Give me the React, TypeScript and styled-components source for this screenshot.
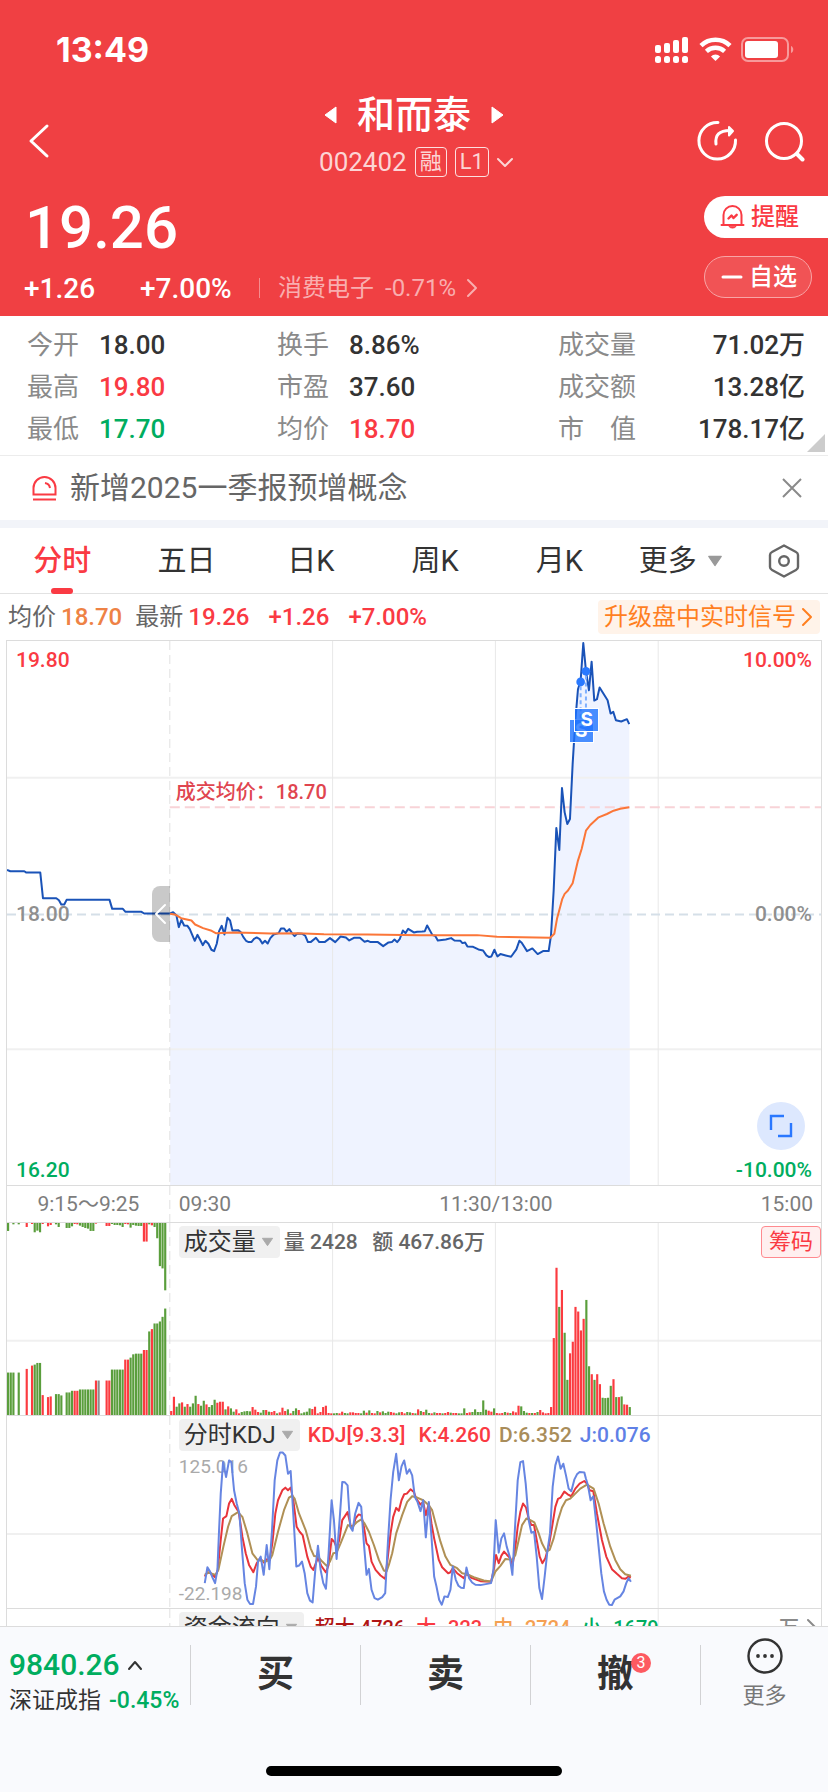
import React from "react";
import styled, { createGlobalStyle, css } from "styled-components";

const RED = "#fa3a43";
const GREEN = "#00ad5f";
const INK = "#333333";
const LINE = "#dcdcdc";

const GlobalStyle = createGlobalStyle`
  * { box-sizing: border-box; }
  body {
    margin: 0;
    background: #ffffff;
    color: ${INK};
    font-family: Roboto, "Noto Sans CJK SC", sans-serif;
  }
  button {
    font: inherit;
    color: inherit;
    background: none;
    border: 0;
    padding: 0;
    cursor: pointer;
  }
  a { color: inherit; text-decoration: none; }
  svg { display: block; flex: none; }
  dl, dt, dd, h1, p { margin: 0; }
`;

/* ---------- data ---------- */

const AUCTION_PRICE =
  "0,688 10,692 52,692 58,696 100,696 108,773 148,773 156,779 163,792 172,792 179,778 308,778 316,805 348,805 356,814 404,814 412,819 489,819";

const PRICE =
  "490,819 499,815 509,825 516,860 524,838 532,855 542,856 549,866 557,885 564,901 572,883 580,898 588,914 596,901 605,910 614,928 622,932 630,910 637,872 645,856 653,882 662,832 670,840 677,870 694,869 702,875 710,890 718,901 726,905 734,905 742,895 750,891 759,896 767,909 775,901 783,909 791,893 801,882 816,878 823,864 832,864 840,874 848,866 856,878 864,887 872,879 887,880 896,886 904,905 912,905 928,892 938,905 954,905 970,893 986,905 1002,888 1018,891 1028,900 1042,892 1060,892 1074,904 1084,901 1092,905 1114,905 1130,917 1146,906 1156,905 1164,897 1172,905 1180,895 1189,870 1197,878 1205,865 1222,876 1232,874 1247,873 1255,872 1262,855 1278,884 1286,886 1294,900 1318,897 1334,893 1344,900 1362,901 1368,908 1376,906 1383,918 1400,919 1416,927 1430,930 1440,945 1448,950 1455,948 1464,928 1473,948 1482,941 1498,945 1514,949 1530,927 1539,901 1546,907 1562,932 1578,924 1594,941 1610,932 1627,932 1634,885 1642,750 1650,562 1659,628 1667,442 1675,515 1683,550 1691,535 1699,370 1707,240 1715,145 1723,120 1731,6 1739,90 1748,148 1756,62 1764,179 1772,175 1780,140 1804,178 1813,218 1821,213 1829,238 1845,242 1862,235 1869,250";

const AVERAGE =
  "490,820 507,823 523,833 554,840 565,852 589,863 612,870 627,878 682,876 792,879 872,878 952,881 1082,882 1242,884 1412,884 1472,889 1632,892 1644,880 1652,835 1668,775 1675,760 1685,750 1699,728 1715,660 1726,625 1739,570 1752,553 1777,530 1802,520 1822,510 1842,504 1869,500";

const LINE_J =
  "594,504 602,456 610,469 618,489 625,504 632,464 637,344 642,234 649,139 658,184 667,134 674,139 682,224 690,264 698,294 706,404 714,504 722,554 730,567 739,567 748,514 754,439 762,424 771,479 780,389 788,462 796,344 804,194 812,134 820,110 828,110 836,119 844,174 852,166 861,314 869,454 877,451 886,439 894,474 902,534 910,557 918,562 926,464 934,391 942,464 950,504 958,521 966,414 975,254 982,314 990,431 999,314 1007,199 1015,200 1023,209 1031,334 1038,346 1046,294 1056,262 1064,274 1072,384 1080,479 1087,461 1095,524 1104,549 1114,554 1127,546 1136,534 1144,384 1152,254 1160,169 1169,114 1177,194 1185,152 1193,134 1201,174 1209,161 1217,179 1225,244 1233,259 1242,287 1250,254 1258,366 1267,259 1275,364 1283,484 1290,514 1298,554 1306,569 1314,544 1324,546 1332,524 1339,454 1348,494 1356,512 1364,518 1372,519 1380,457 1388,489 1397,502 1407,509 1422,510 1454,504 1461,464 1468,314 1477,412 1485,369 1493,354 1501,394 1510,424 1518,479 1526,334 1534,194 1542,139 1550,136 1558,204 1567,314 1575,352 1583,349 1591,424 1599,519 1607,552 1615,484 1623,409 1631,354 1639,214 1647,149 1655,122 1663,159 1671,144 1679,179 1687,219 1695,227 1704,192 1712,176 1720,169 1734,170 1739,189 1745,209 1753,254 1761,242 1769,314 1777,394 1785,474 1793,529 1801,554 1809,569 1817,570 1825,554 1842,544 1852,529 1860,504 1867,489 1874,500";

const LINE_K =
  "594,484 602,471 612,474 625,486 633,464 642,374 649,309 659,302 667,264 675,250 683,269 696,289 707,364 717,414 727,449 740,471 750,444 760,429 772,442 781,432 789,434 797,384 806,294 814,254 827,224 836,216 844,224 852,216 860,254 870,334 879,349 888,359 902,424 912,454 920,464 934,427 944,452 958,472 966,449 975,371 983,379 991,399 998,374 1007,314 1023,290 1032,329 1039,336 1047,309 1056,297 1064,299 1072,334 1080,384 1087,392 1095,439 1107,464 1122,481 1136,491 1144,424 1152,354 1160,304 1169,277 1177,286 1185,254 1193,236 1201,234 1212,221 1222,229 1229,249 1242,267 1250,259 1258,299 1267,264 1275,324 1283,369 1297,434 1307,456 1325,474 1331,472 1339,459 1352,474 1372,489 1380,476 1397,489 1422,498 1454,500 1462,464 1469,419 1477,444 1485,421 1493,409 1502,419 1512,429 1518,452 1526,404 1534,334 1542,289 1550,264 1559,276 1567,309 1575,329 1583,329 1592,379 1600,424 1608,444 1617,429 1628,389 1639,324 1647,274 1655,250 1663,246 1674,228 1684,236 1695,242 1707,219 1720,204 1734,196 1742,204 1750,224 1761,227 1772,294 1787,374 1800,424 1817,462 1832,476 1847,489 1857,491 1867,484 1874,487";

const LINE_D =
  "594,479 604,472 627,479 635,464 650,394 664,334 675,302 694,290 707,304 722,354 737,414 752,434 777,439 789,434 797,419 814,349 832,284 847,246 857,240 864,249 877,294 897,344 912,399 922,422 934,424 947,439 960,452 970,439 980,414 990,412 1002,384 1024,329 1037,334 1052,319 1064,312 1074,324 1087,349 1102,389 1117,434 1132,466 1140,469 1147,449 1157,414 1169,354 1187,299 1202,259 1217,242 1232,246 1250,254 1267,269 1277,284 1290,334 1302,379 1317,424 1332,449 1352,459 1367,474 1382,477 1402,486 1432,496 1454,499 1467,469 1482,452 1497,431 1518,434 1527,419 1537,374 1547,329 1560,309 1572,314 1584,321 1597,354 1607,384 1620,409 1630,404 1642,369 1655,314 1667,276 1679,254 1692,249 1707,234 1722,219 1742,207 1762,219 1777,264 1792,324 1812,394 1827,434 1842,462 1857,477 1874,482";

/* one entry per bar: height followed by its colour letter, "-" for an empty slot */
const AUCTION_MATCHED =
  "128g 128g 128g - 128g - - 139r - 149r 152g 157g 157g 60r - 54r 56r - 63g 63g 59g - 68g 68g 73g 73r 73r 77g 77g 77g 77g 77g 77g 104r 104n - - 104r 104r 137g 137g 137g 137g 137g 167r 167r 173g 183g 185g 185g 185g 196r 196r 252g 259r 276g 276g 282g 296g 321g";
const AUCTION_UNMATCHED =
  "24g - 4g - 4g - - 12r - 3r 28g 23g 28g 3r - 10r 6r - 4g 12g - - 15g 15g 10g 3r 4r 8g 12g 15g 17g 24g 24g 2r - - - 9r 9r 3g 6g 6g 7g 12g 3r 4r 14g 6g 8g 9g 9g 56r 56r 4g 7r 12g 46g 130g 137g 203g";
const VOLUME =
  "12r 55r 25g 35g 38r 25g 33r 25g 35g 58g 33r 28g 43g 32r 24g 30g 46g 37r 40r 40r 17g 26r 20g 10g 17r 5r 9g 11g 12g 11g 24r 16r 9r 7g 15g 15r 10g 9r 12r 5g 8r 22r 12r 17g 5r 12g 20g 15r 5g 8g 10g 20g 18r 25r 5r 9r 24r 28r 6r 5r 5g 6g 5r 10r 6g 5g 8r 8r 6r 6r 5g 13g 7r 14g 6r 5r 12g 8r 11g 6g 10g 9r 7r 5g 8g 9r 5r 9g 8g 6r 5g 17r 12g 9r 16g 6g 5r 8g 6r 6r 5g 6r 9r 7g 6r 6r 5g 5g 20g 6r 8r 9g 17g 9g 9g 44g 16g 13r 10r 20g 6r 5r 6r 9g 7r 6g 11r 8r 28r 26g 12g 7g 6r 6g 6r 9g 15r 8r 5r 6r 24r 232r 444r 326g 377r 248g 106g 186r 221r 326r 312r 255r 290r 347g 147g 123r 106g 123r 93r 52g 51g 52g 88g 108r 54g 54r 56g 32r 31r 24g";

const BAR_COLORS: Record<string, string> = { r: "#fb3b40", g: "#5a9e3c", n: "#8c8c8c" };

/* ---------- header ---------- */

const Page = styled.div`
  display: flex;
  flex-direction: column;
  height: 100vh;
`;

const Header = styled.header`
  flex: none;
  background: #f04043;
  color: #ffffff;
`;

const StatusBar = styled.div`
  display: flex;
  justify-content: space-between;
  align-items: center;
  height: 92px;
  padding: 8px 33px 0 56px;
`;

const Clock = styled.span`
  font: 700 34px/40px Inter, sans-serif;
`;

const NavRow = styled.div`
  display: grid;
  grid-template-columns: 1fr auto 1fr;
  align-items: center;
  height: 98px;
  padding: 0 22px 0 30px;
`;

const BackButton = styled.button`
  justify-self: start;
`;

const NavActions = styled.div`
  display: flex;
  justify-content: flex-end;
  gap: 26px;
`;

const StockTitle = styled.div`
  align-self: start;
  margin-right: 8px;
`;

const NameRow = styled.div`
  display: flex;
  justify-content: center;
  align-items: center;
  gap: 20px;
  height: 46px;
`;

const StockName = styled.h1`
  font-size: 38px;
  font-weight: 500;
  line-height: 46px;
`;

const CodeRow = styled.div`
  display: flex;
  justify-content: center;
  align-items: center;
  gap: 8px;
  height: 48px;
  padding-left: 4px;
  font-size: 26px;
  color: #fcd5d5;
`;

const CodeTag = styled.span`
  min-width: 30px;
  height: 30px;
  padding: 0 4px;
  border: 1px solid #fde0e0;
  border-radius: 4px;
  font-size: 22px;
  line-height: 28px;
  text-align: center;
`;

const QuoteRow = styled.div`
  display: flex;
  justify-content: space-between;
  height: 126px;
`;

const Price = styled.p`
  padding-left: 25px;
  font-size: 60px;
  font-weight: 500;
  line-height: 76px;
`;

const ChangeRow = styled.div`
  display: flex;
  align-items: center;
  height: 44px;
  padding-left: 24px;
  font-size: 28px;
  font-weight: 500;
`;

const Change = styled.span`
  width: 116px;
`;

const SectorLink = styled.a`
  display: flex;
  align-items: center;
  gap: 11px;
  margin-left: 3px;
  padding-left: 18px;
  border-left: 1px solid #f58c8e;
  font-size: 24px;
  font-weight: 400;
  line-height: 20px;
  color: #f9aeaf;
`;

const QuoteActions = styled.div`
  display: flex;
  flex-direction: column;
  gap: 18px;
  width: 124px;
  padding-top: 6px;
`;

const PillButton = styled.button<{ $solid?: boolean }>`
  display: flex;
  align-items: center;
  gap: 6px;
  height: 42px;
  padding-left: 16px;
  font-size: 24px;
  font-weight: 500;
  line-height: 40px;
  ${(p) =>
    p.$solid
      ? css`
          background: #ffffff;
          color: ${RED};
          border-radius: 21px 0 0 21px;
        `
      : css`
          margin-right: 16px;
          background: #f15355;
          border: 1px solid #f8a5a6;
          border-radius: 21px;
        `}
`;

/* ---------- statistics ---------- */

const Content = styled.main`
  flex: 1;
  min-height: 0;
  overflow-y: auto;
  scrollbar-width: none;
`;

const Stats = styled.dl`
  position: relative;
  display: grid;
  grid-template-columns: 250fr 281fr 247fr;
  grid-auto-rows: 42px;
  height: 140px;
  padding: 8px 23px 0 27px;
  border-bottom: 1px solid #ececec;
  font-size: 26px;
  line-height: 42px;
`;

const Stat = styled.div<{ $wide?: boolean }>`
  display: flex;
  justify-content: ${(p) => (p.$wide ? "space-between" : "flex-start")};
  dt {
    min-width: ${(p) => (p.$wide ? "78px" : "72px")};
    color: #8a8a8a;
  }
`;

const StatValue = styled.dd<{ $color?: string }>`
  font-weight: 500;
  color: ${(p) => p.$color || INK};
`;

const SpacedLabel = styled.span`
  display: flex;
  justify-content: space-between;
`;

const Corner = styled.span`
  position: absolute;
  right: 3px;
  bottom: 3px;
  border-left: 18px solid transparent;
  border-bottom: 18px solid #cccccc;
`;

const Notice = styled.div`
  display: flex;
  align-items: center;
  gap: 13px;
  height: 72px;
  padding: 0 26px 0 32px;
  border-bottom: 8px solid #f2f4f9;
`;

const NoticeText = styled.a`
  flex: 1;
  font-size: 30px;
  line-height: 40px;
  color: #666666;
`;

/* ---------- period tabs ---------- */

const Tabs = styled.nav`
  display: grid;
  grid-template-columns: repeat(5, 124fr) 118fr 88fr;
  height: 66px;
  border-bottom: 1px solid #e2e2e2;
`;

const Tab = styled.button<{ $active?: boolean }>`
  position: relative;
  display: flex;
  justify-content: center;
  align-items: center;
  gap: 10px;
  font-size: 29px;
  line-height: 66px;
  font-weight: ${(p) => (p.$active ? 500 : 400)};
  color: ${(p) => (p.$active ? RED : INK)};
  ${(p) =>
    p.$active &&
    css`
      &::after {
        content: "";
        position: absolute;
        bottom: 0;
        width: 22px;
        height: 6px;
        border-radius: 3px;
        background: ${RED};
      }
    `}
`;

const Legend = styled.div`
  display: flex;
  align-items: center;
  height: 46px;
  padding: 0 8px 0 8px;
  font-size: 24px;
  line-height: 34px;
`;

const LegendLabel = styled.span`
  margin-right: 5px;
  color: #666666;
`;

const LegendValue = styled.span<{ $color?: string }>`
  margin-right: ${(p) => (p.$color ? "13px" : "19px")};
  font-weight: 500;
  color: ${(p) => p.$color || RED};
`;

const SignalLink = styled.a`
  display: flex;
  align-items: center;
  gap: 6px;
  height: 34px;
  margin-left: auto;
  padding: 0 8px 0 6px;
  border-radius: 4px;
  background: #fff3e9;
  color: #ff7f1f;
`;

/* ---------- charts ---------- */

const Charts = styled.section`
  margin: 0 6px;
  border: 1px solid ${LINE};
  border-width: 0 1px;
`;

const Panel = styled.div<{ $height: number }>`
  position: relative;
  height: ${(p) => p.$height}px;
  border-top: 1px solid ${LINE};
`;

const Plot = styled.svg`
  position: absolute;
  inset: 0;
  width: 100%;
  height: 100%;
  polyline, line, circle { vector-effect: non-scaling-stroke; }
`;

const AxisLabel = styled.span<{ $color: string; $side: "left" | "right"; $at: "top" | "middle" | "bottom" }>`
  position: absolute;
  ${(p) => p.$side}: 9px;
  ${(p) => (p.$at === "top" ? "top: 7px;" : p.$at === "bottom" ? "bottom: 3px;" : "top: calc(50% - 11px);")}
  font-size: 21px;
  font-weight: 500;
  line-height: 24px;
  color: ${(p) => p.$color};
`;

const AverageLabel = styled.span`
  position: absolute;
  left: calc(20% + 6px);
  bottom: 70%;
  font-size: 20px;
  font-weight: 500;
  line-height: 24px;
  color: #e0454f;
`;

const CollapseHandle = styled.button`
  position: absolute;
  right: 80%;
  top: calc(50% - 27px);
  display: flex;
  align-items: center;
  justify-content: center;
  width: 18px;
  height: 56px;
  border-radius: 8px 0 0 8px;
  background: rgba(0, 0, 0, 0.21);
`;

const ExpandButton = styled.button`
  position: absolute;
  right: 16px;
  bottom: 35px;
  display: flex;
  align-items: center;
  justify-content: center;
  width: 48px;
  height: 48px;
  border-radius: 50%;
  background: #dde8fe;
`;

const TradeMark = styled.span<{ $left: number; $top: number }>`
  position: absolute;
  left: ${(p) => p.$left}%;
  top: ${(p) => p.$top}%;
  width: 25px;
  height: 24px;
  border: 1px solid #ffffff;
  background: rgba(30, 115, 255, 0.8);
  color: #ffffff;
  font: 700 19px/22px Inter, sans-serif;
  text-align: center;
`;

const TimeAxis = styled(Panel)`
  display: grid;
  grid-template-columns: 1fr 2fr 2fr;
  align-items: center;
  font-size: 21px;
  line-height: 34px;
  color: #7d7d7d;
  span { position: relative; }
`;

const AuctionTime = styled.span`
  text-align: center;
`;

const SessionTimes = styled.div`
  grid-column: 2 / 4;
  display: grid;
  grid-template-columns: 1fr auto 1fr;
  padding: 0 8px 0 9px;
  span:last-child { text-align: right; }
`;

const PanelHead = styled.div<{ $gap: number }>`
  position: relative;
  display: flex;
  align-items: center;
  gap: ${(p) => p.$gap}px;
  padding: 3px 0 0 calc(20% + 9px);
  font-weight: 500;
  line-height: 32px;
  white-space: nowrap;
`;

const IndicatorButton = styled.button`
  display: flex;
  align-items: center;
  gap: 5px;
  height: 32px;
  padding: 0 6px 0 5px;
  border-radius: 4px;
  background: #f0f0f0;
  font-size: 24px;
  font-weight: 400;
  line-height: 32px;
  color: ${INK};
`;

const ChipButton = styled.button`
  height: 32px;
  margin-left: auto;
  padding: 0 7px;
  border: 1px solid #ff8a8f;
  border-radius: 4px;
  background: #ffefef;
  font-size: 22px;
  font-weight: 400;
  line-height: 30px;
  color: ${RED};
`;

const Reading = styled.span<{ $color: string; $small?: boolean }>`
  font-size: ${(p) => (p.$small ? 20 : 21)}px;
  color: ${(p) => p.$color};
`;

const Unit = styled.button`
  display: flex;
  align-items: center;
  gap: 8px;
  margin-left: auto;
  padding-right: 4px;
  font-size: 20px;
  color: #8a8a8a;
`;

const ScaleLabel = styled.span<{ $at: "top" | "bottom" }>`
  position: absolute;
  left: calc(20% + 9px);
  ${(p) => (p.$at === "top" ? "top: 39px" : "bottom: 2px")};
  font-size: 19px;
  line-height: 24px;
  color: #aaaaaa;
`;

/* ---------- bottom bar ---------- */

const BottomBar = styled.footer`
  flex: none;
  height: 166px;
  border-top: 1px solid ${LINE};
  background: #f9fafd;
`;

const ActionRow = styled.div`
  display: grid;
  grid-template-columns: 190fr 170fr 170fr 170fr 128fr;
  align-items: center;
  height: 96px;
`;

const IndexButton = styled.button`
  padding: 14px 0 0 9px;
  text-align: left;
  white-space: nowrap;
`;

const IndexValue = styled.span`
  display: flex;
  align-items: center;
  gap: 8px;
  font-size: 30px;
  font-weight: 500;
  line-height: 38px;
  color: ${GREEN};
`;

const IndexName = styled.span`
  display: flex;
  align-items: center;
  gap: 8px;
  font-size: 23px;
  line-height: 34px;
`;

const IndexChange = styled.span`
  font-weight: 500;
  color: ${GREEN};
`;

const TradeButton = styled.button`
  height: 60px;
  border-left: 1px solid #d2d2d4;
  font-size: 37px;
  font-weight: 700;
  line-height: 60px;
`;

const Badged = styled.span`
  position: relative;
`;

const Badge = styled.span`
  position: absolute;
  left: 34px;
  top: 0;
  width: 20px;
  height: 20px;
  border-radius: 50%;
  background: #fd5a61;
  color: #ffffff;
  font-size: 16px;
  font-weight: 400;
  line-height: 20px;
  text-align: center;
`;

const MoreButton = styled.button`
  display: flex;
  flex-direction: column;
  align-items: center;
  justify-content: center;
  gap: 6px;
  height: 60px;
  border-left: 1px solid #d2d2d4;
  font-size: 22px;
  line-height: 32px;
  color: #777777;
`;

const HomeIndicator = styled.div`
  width: 296px;
  height: 10px;
  margin: 43px auto 0;
  border-radius: 5px;
  background: #000000;
`;

/* ---------- drawings ---------- */

const StatusIcons = () => (
  <svg width="140" height="28" viewBox="0 0 140 28" fill="#fff">
    {[0, 9, 18, 27].map((x, i) => (
      <g key={x}>
        <rect x={x} y={[9, 7, 4, 1][i]} width="6" height={[8, 10, 13, 16][i]} rx="2" />
        <rect x={x} y="20" width="6" height="7" rx="2.5" />
      </g>
    ))}
    <g fill="none" stroke="#fff">
      <path d="M46 9.6a21 21 0 0 1 29 0" strokeWidth="4.6" />
      <path d="M51.4 15.4a13.3 13.3 0 0 1 18.2 0" strokeWidth="4.4" />
    </g>
    <path d="M60.500 25l-4.600-4.600a6.500 6.500 0 0 1 9.200 0z" />
    <rect x="87" y="2" width="46" height="23" rx="6" fill="none" stroke="#f79a9b" strokeWidth="2" />
    <rect x="90" y="5" width="33" height="17" rx="3" />
    <path d="M136 10c3 1 3 6 0 7z" fill="#f79a9b" />
  </svg>
);

const Chevron = ({ dir, w, h, color, stroke = 2 }: { dir: "left" | "right" | "up" | "down"; w: number; h: number; color: string; stroke?: number }) => {
  const p = {
    left: `${w - 1},1 1,${h / 2} ${w - 1},${h - 1}`,
    right: `1,1 ${w - 1},${h / 2} 1,${h - 1}`,
    up: `1,${h - 1} ${w / 2},1 ${w - 1},${h - 1}`,
    down: `1,1 ${w / 2},${h - 1} ${w - 1},1`,
  }[dir];
  return (
    <svg width={w} height={h} viewBox={`0 0 ${w} ${h}`} overflow="visible">
      <polyline points={p} fill="none" stroke={color} strokeWidth={stroke} strokeLinecap="round" strokeLinejoin="round" />
    </svg>
  );
};

const Caret = ({ w, h, color }: { w: number; h: number; color: string }) => (
  <svg width={w} height={h} viewBox="0 0 14 10">
    <path d="M1.500 1h11L7 9z" fill={color} stroke={color} strokeLinejoin="round" />
  </svg>
);

const NameArrow = ({ flip }: { flip?: boolean }) => (
  <svg width="13" height="18" viewBox="0 0 13 18">
    <path d={flip ? "M1 1v16L12 9z" : "M12 1v16L1 9z"} fill="#fff" stroke="#fff" strokeLinejoin="round" />
  </svg>
);

const ShareIcon = () => (
  <svg width="42" height="42" viewBox="0 0 42 42" fill="none" stroke="#fff" strokeWidth="3" strokeLinecap="round" strokeLinejoin="round">
    <path d="M22 2.500A18.300 18.300 0 1 0 39.500 20" />
    <path d="M20 24c-1-9 3-13.500 14-13.500" />
    <path d="M33 7l4 4-4 4.500z" fill="#fff" strokeWidth="2" />
  </svg>
);

const SearchIcon = () => (
  <svg width="42" height="42" viewBox="0 0 42 42" fill="none" stroke="#fff" strokeWidth="3" strokeLinecap="round">
    <circle cx="20" cy="21" r="17.500" />
    <path d="M33 34l5.500 5.500" strokeWidth="4" />
  </svg>
);

const BellIcon = () => (
  <svg width="25" height="26" viewBox="0 0 25 26" fill="none" stroke={RED} strokeWidth="2" strokeLinecap="round" strokeLinejoin="round">
    <path d="M1.500 21h22M3.500 20.500V11a9 9 0 0 1 18 0v9.500" />
    <path d="M9 22.500a4 3 0 0 0 7 0z" fill={RED} strokeWidth="1" />
    <path d="M8.500 14.500l3-3 2 2.500 3.200-3.200" strokeWidth="2.400" />
  </svg>
);

const SirenIcon = () => (
  <svg width="25" height="25" viewBox="0 0 25 25" fill="none" stroke={RED} strokeWidth="2">
    <path d="M1.500 18.500V12a11 11 0 0 1 22 0v6.500zM1 23.500h23" />
    <path d="M13 7c3 .5 4.500 2 5 5" />
  </svg>
);

const CloseIcon = () => (
  <svg width="20" height="20" viewBox="0 0 20 20" stroke="#8a8a8a" strokeWidth="2">
    <path d="M1 1l18 18M19 1L1 19" />
  </svg>
);

const HexIcon = () => (
  <svg width="32" height="34" viewBox="0 0 32 34" fill="none" stroke="#666" strokeWidth="2.400" strokeLinejoin="round">
    <path d="M16 1.500L28 8q2 1 2 3v12q0 2-2 3l-12 6.500L4 26q-2-1-2-3V11q0-2 2-3z" />
    <circle cx="16" cy="17" r="4.800" />
  </svg>
);

const ExpandIcon = () => (
  <svg width="24" height="24" viewBox="0 0 24 24" fill="none" stroke="#2a78ff" strokeWidth="2.400">
    <path d="M15 2H2v14M9 22h13V9" />
  </svg>
);

const MoreIcon = () => (
  <svg width="36" height="36" viewBox="0 0 36 36" fill={INK}>
    <circle cx="18" cy="18" r="16.500" fill="none" stroke={INK} strokeWidth="2.400" />
    <circle cx="11" cy="18" r="1.900" />
    <circle cx="18" cy="18" r="1.900" />
    <circle cx="25" cy="18" r="1.900" />
  </svg>
);

const Grid = ({ height, rows = [] }: { height: number; rows?: number[] }) => (
  <g stroke="#e8e8e8">
    {rows.map((y) => (
      <line key={y} x1="0" x2="2445" y1={y} y2={y} stroke="#f0f0f0" strokeWidth="2" />
    ))}
    <line x1="489" x2="489" y1="0" y2={height} stroke="#e2e2e2" strokeDasharray="9 5" />
    {[978, 1467, 1956].map((x) => (
      <line key={x} x1={x} x2={x} y1="0" y2={height} />
    ))}
  </g>
);

const Bars = ({ data, start, pitch, base, down }: { data: string; start: number; pitch: number; base: number; down?: boolean }) => (
  <g>
    {data.split(" ").map((item, i) => {
      if (item === "-") return null;
      const h = parseInt(item, 10);
      return (
        <rect
          key={i}
          x={start + pitch * i}
          y={down ? base : base - h}
          width="6.5"
          height={h}
          fill={BAR_COLORS[item.slice(-1)]}
        />
      );
    })}
  </g>
);

const Curve = ({ points, color, width = 2 }: { points: string; color: string; width?: number }) => (
  <polyline points={points} fill="none" stroke={color} strokeWidth={width} strokeLinejoin="round" />
);

const STATS = [
  { label: "今开", value: "18.00" },
  { label: "换手", value: "8.86%" },
  { label: "成交量", value: "71.02万", wide: true },
  { label: "最高", value: "19.80", color: RED },
  { label: "市盈", value: "37.60" },
  { label: "成交额", value: "13.28亿", wide: true },
  { label: "最低", value: "17.70", color: GREEN },
  { label: "均价", value: "18.70", color: RED },
  { label: "市值", value: "178.17亿", wide: true },
];

export default function App() {
  return (
    <Page>
      <GlobalStyle />
      <Header>
        <StatusBar>
          <Clock>13:49</Clock>
          <StatusIcons />
        </StatusBar>
        <NavRow>
          <BackButton aria-label="返回">
            <Chevron dir="left" w={18} h={32} color="#fff" stroke={3} />
          </BackButton>
          <StockTitle>
            <NameRow>
              <button aria-label="上一只"><NameArrow /></button>
              <StockName>和而泰</StockName>
              <button aria-label="下一只"><NameArrow flip /></button>
            </NameRow>
            <CodeRow>
              <span>002402</span>
              <CodeTag>融</CodeTag>
              <CodeTag>L1</CodeTag>
              <Chevron dir="down" w={16} h={9} color="#fcd5d5" />
            </CodeRow>
          </StockTitle>
          <NavActions>
            <button aria-label="分享"><ShareIcon /></button>
            <button aria-label="搜索"><SearchIcon /></button>
          </NavActions>
        </NavRow>
        <QuoteRow>
          <div>
            <Price>19.26</Price>
            <ChangeRow>
              <Change>+1.26</Change>
              <Change>+7.00%</Change>
              <SectorLink href="#sector">
                <span>消费电子</span>
                <span>-0.71%</span>
                <Chevron dir="right" w={10} h={18} color="#f9aeaf" />
              </SectorLink>
            </ChangeRow>
          </div>
          <QuoteActions>
            <PillButton $solid><BellIcon />提醒</PillButton>
            <PillButton>
              <svg width="22" height="4" viewBox="0 0 22 4"><path d="M2 2h18" stroke="#fff" strokeWidth="3" strokeLinecap="round" /></svg>
              自选
            </PillButton>
          </QuoteActions>
        </QuoteRow>
      </Header>

      <Content>
        <Stats>
          {STATS.map((s) => (
            <Stat key={s.label} $wide={s.wide}>
              <dt>
                {s.label === "市值" ? <SpacedLabel><span>市</span><span>值</span></SpacedLabel> : s.label}
              </dt>
              <StatValue $color={s.color}>{s.value}</StatValue>
            </Stat>
          ))}
          <Corner />
        </Stats>

        <Notice>
          <SirenIcon />
          <NoticeText href="#notice">新增2025一季报预增概念</NoticeText>
          <button aria-label="关闭"><CloseIcon /></button>
        </Notice>

        <Tabs>
          <Tab $active>分时</Tab>
          <Tab>五日</Tab>
          <Tab>日K</Tab>
          <Tab>周K</Tab>
          <Tab>月K</Tab>
          <Tab>更多<Caret w={16} h={12} color="#999" /></Tab>
          <Tab aria-label="设置"><HexIcon /></Tab>
        </Tabs>

        <Legend>
          <LegendLabel>均价</LegendLabel>
          <LegendValue $color="#ee8245">18.70</LegendValue>
          <LegendLabel>最新</LegendLabel>
          <LegendValue>19.26</LegendValue>
          <LegendValue>+1.26</LegendValue>
          <LegendValue>+7.00%</LegendValue>
          <SignalLink href="#signal">
            升级盘中实时信号
            <Chevron dir="right" w={10} h={18} color="#ff7f1f" />
          </SignalLink>
        </Legend>

        <Charts>
          <Panel $height={545}>
            <Plot viewBox="0 0 2445 1635" preserveAspectRatio="none">
              <polygon points={`490,1635 ${PRICE} 1871,1635`} fill="#eff3ff" />
              <Grid height={1635} rows={[411, 1227]} />
              <line x1="0" x2="2445" y1="822" y2="822" stroke="#d5dfe8" strokeWidth="2" strokeDasharray="9 5" />
              <line x1="489" x2="2445" y1="500" y2="500" stroke="#f8d3d7" strokeWidth="2" strokeDasharray="10 5" />
              <Curve points={AUCTION_PRICE} color="#1a53b8" />
              <Curve points={PRICE} color="#1a53b8" />
              <Curve points={AVERAGE} color="#fb7638" />
              <g stroke="#7fb0ff" strokeWidth="2">
                <line x1="1723" x2="1723" y1="136" y2="236" strokeDasharray="4 3" />
                <line x1="1739" x2="1739" y1="104" y2="200" strokeDasharray="4 3" />
              </g>
              <circle cx="1723" cy="123" r="13" fill="#2979ff" />
              <circle cx="1739" cy="91" r="13" fill="#2979ff" />
            </Plot>
            <TradeMark $left={69} $top={14.4}>S</TradeMark>
            <TradeMark $left={69.7} $top={12.4}>S</TradeMark>
            <AxisLabel $side="left" $at="top" $color={RED}>19.80</AxisLabel>
            <AxisLabel $side="right" $at="top" $color={RED}>10.00%</AxisLabel>
            <AxisLabel $side="left" $at="middle" $color="#8f8f8f">18.00</AxisLabel>
            <AxisLabel $side="right" $at="middle" $color="#8f8f8f">0.00%</AxisLabel>
            <AxisLabel $side="left" $at="bottom" $color={GREEN}>16.20</AxisLabel>
            <AxisLabel $side="right" $at="bottom" $color={GREEN}>-10.00%</AxisLabel>
            <AverageLabel>成交均价：18.70</AverageLabel>
            <CollapseHandle aria-label="收起竞价">
              <Chevron dir="left" w={11} h={20} color="#fff" />
            </CollapseHandle>
            <ExpandButton aria-label="全屏"><ExpandIcon /></ExpandButton>
          </Panel>

          <TimeAxis $height={37}>
            <Plot viewBox="0 0 2445 111" preserveAspectRatio="none">
              <line x1="489" x2="489" y1="0" y2="111" stroke="#e2e2e2" strokeDasharray="9 5" />
            </Plot>
            <AuctionTime>9:15～9:25</AuctionTime>
            <SessionTimes>
              <span>09:30</span>
              <span>11:30/13:00</span>
              <span>15:00</span>
            </SessionTimes>
          </TimeAxis>

          <Panel $height={193}>
            <Plot viewBox="0 0 2445 579" preserveAspectRatio="none">
              <Grid height={579} rows={[355]} />
              <Bars data={AUCTION_UNMATCHED} start={0} pitch={8} base={0} down />
              <Bars data={AUCTION_MATCHED} start={0} pitch={8} base={579} />
              <Bars data={VOLUME} start={490} pitch={8.15} base={579} />
            </Plot>
            <PanelHead $gap={4}>
              <IndicatorButton>成交量<Caret w={13} h={10} color="#aaa" /></IndicatorButton>
              <Reading $color="#666666">量 2428</Reading>
              <Reading $color="#666666">&nbsp; 额 467.86万</Reading>
              <ChipButton>筹码</ChipButton>
            </PanelHead>
          </Panel>

          <Panel $height={193}>
            <Plot viewBox="0 0 2445 579" preserveAspectRatio="none">
              <Grid height={579} rows={[356]} />
            </Plot>
            <ScaleLabel $at="top">125.016</ScaleLabel>
            <ScaleLabel $at="bottom">-22.198</ScaleLabel>
            <Plot viewBox="0 0 2445 579" preserveAspectRatio="none">
              <Curve points={LINE_K} color="#e8343a" />
              <Curve points={LINE_D} color="#b09055" />
              <Curve points={LINE_J} color="#6685e2" />
            </Plot>
            <PanelHead $gap={8}>
              <IndicatorButton>分时KDJ<Caret w={13} h={10} color="#aaa" /></IndicatorButton>
              <Reading $color={RED}>KDJ[9.3.3]&nbsp;</Reading>
              <Reading $color={RED}>K:4.260</Reading>
              <Reading $color="#a98d5a">D:6.352</Reading>
              <Reading $color="#5f80e6">J:0.076</Reading>
            </PanelHead>
          </Panel>

          <Panel $height={193}>
            <Plot viewBox="0 0 2445 579" preserveAspectRatio="none">
              <Grid height={579} rows={[356]} />
            </Plot>
            <PanelHead $gap={11}>
              <IndicatorButton>资金流向<Caret w={13} h={10} color="#aaa" /></IndicatorButton>
              <Reading $small $color="#b01515">超大 4726</Reading>
              <Reading $small $color={RED}>大 -323</Reading>
              <Reading $small $color="#f5a052">中 -2724</Reading>
              <Reading $small $color={GREEN}>小 -1679</Reading>
              <Unit>万<Chevron dir="right" w={10} h={18} color="#8a8a8a" /></Unit>
            </PanelHead>
          </Panel>
        </Charts>
      </Content>

      <BottomBar>
        <ActionRow>
          <IndexButton>
            <IndexValue>
              9840.26
              <Chevron dir="up" w={14} h={9} color={INK} />
            </IndexValue>
            <IndexName>
              深证成指
              <IndexChange>-0.45%</IndexChange>
            </IndexName>
          </IndexButton>
          <TradeButton>买</TradeButton>
          <TradeButton>卖</TradeButton>
          <TradeButton>
            <Badged>撤<Badge>3</Badge></Badged>
          </TradeButton>
          <MoreButton><MoreIcon />更多</MoreButton>
        </ActionRow>
        <HomeIndicator />
      </BottomBar>
    </Page>
  );
}
